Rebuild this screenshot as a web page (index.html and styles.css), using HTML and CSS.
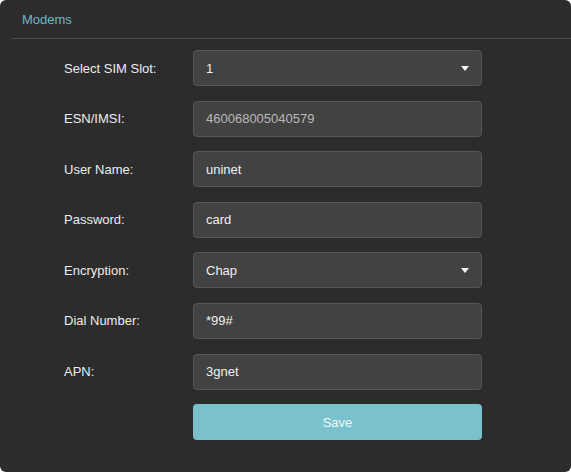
FILE: index.html
```html
<!DOCTYPE html>
<html>
<head>
<meta charset="utf-8">
<link rel="stylesheet" href="styles.css">
</head>
<body>
<div class="panel">
  <div class="header">Modems</div>
  <div class="divider"></div>
  <form class="form">
    <div class="row"><span class="label">Select SIM Slot:</span><div class="field select">1<span class="caret"></span></div></div>
    <div class="row"><span class="label">ESN/IMSI:</span><div class="field muted">460068005040579</div></div>
    <div class="row"><span class="label">User Name:</span><div class="field">uninet</div></div>
    <div class="row"><span class="label">Password:</span><div class="field">card</div></div>
    <div class="row"><span class="label">Encryption:</span><div class="field select">Chap<span class="caret"></span></div></div>
    <div class="row"><span class="label">Dial Number:</span><div class="field">*99#</div></div>
    <div class="row"><span class="label">APN:</span><div class="field">3gnet</div></div>
    <div class="row"><span class="label"></span><div class="save">Save</div></div>
  </form>
</div>
</body>
</html>
```
FILE: styles.css
```css
html, body { margin: 0; padding: 0; background: #ffffff; }
body { font-family: "Liberation Sans", Arial, sans-serif; }
.panel {
  width: 571px;
  height: 472px;
  background: #2c2c2c;
  border-radius: 6px;
  box-sizing: border-box;
  overflow: hidden;
}
.header {
  height: 38px;
  box-sizing: border-box;
  padding: 12px 0 0 22px;
  font-size: 13px;
  color: #6fb7c5;
}
.divider {
  margin-left: 12px;
  height: 1px;
  background: #4c4c4c;
}
.form {
  margin: 0;
  padding-top: 11px;
  display: flex;
  flex-direction: column;
  gap: 14.6px;
}
.row {
  display: flex;
  align-items: center;
  height: 36px;
}
.label {
  width: 129px;
  padding-left: 64px;
  font-size: 13px;
  color: #ececec;
}
.field {
  width: 289px;
  height: 36px;
  box-sizing: border-box;
  background: #424242;
  border: 1px solid #575757;
  border-radius: 4px;
  padding-left: 12px;
  display: flex;
  align-items: center;
  font-size: 13px;
  color: #f0f0f0;
  position: relative;
}
.field.muted { color: #b9b9b9; }
.caret {
  position: absolute;
  right: 12px;
  top: 15px;
  width: 0;
  height: 0;
  border-left: 4px solid transparent;
  border-right: 4px solid transparent;
  border-top: 5px solid #f4f4f4;
}
.save {
  width: 289px;
  height: 36px;
  background: #79c1cd;
  border-radius: 4px;
  display: flex;
  align-items: center;
  justify-content: center;
  font-size: 13px;
  color: #f2f8fa;
}
```
